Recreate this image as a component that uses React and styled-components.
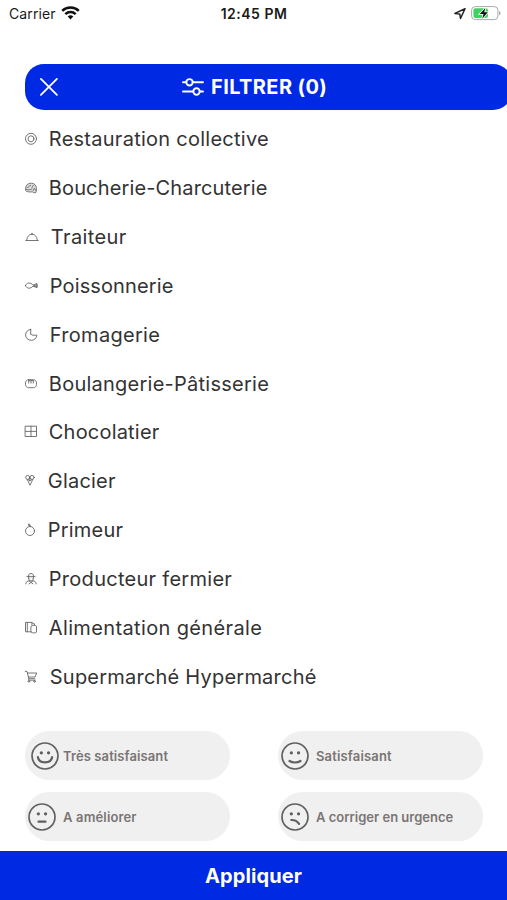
import React from 'react';
import styled, { createGlobalStyle } from 'styled-components';

const Global = createGlobalStyle`
  * { box-sizing: border-box; }
  html, body { margin: 0; padding: 0; background: #fff; }
  body { font-family: Inter, "Liberation Sans", sans-serif; overflow: hidden; }
  svg { display: block; flex: none; }
  button { font: inherit; border: 0; padding: 0; background: none; color: inherit; }
`;

const Screen = styled.div`
  width: 507px;
  height: 900px;
  display: flex;
  flex-direction: column;
  overflow: hidden;
  background: #fff;
`;

const StatusBar = styled.header`
  height: 27px;
  flex: none;
  display: grid;
  grid-template-columns: 1fr auto 1fr;
  align-items: center;
  padding: 0 6px 0 9px;
  color: #1b1b1b;
  font-size: 14px;
`;

const Carrier = styled.div`
  display: flex;
  align-items: center;
  gap: 5px;
  letter-spacing: 0.12px;
`;

const Clock = styled.time`
  font-weight: 600;
  letter-spacing: 0.5px;
  margin-right: 2px;
`;

const Indicators = styled.div`
  display: flex;
  justify-content: flex-end;
  align-items: center;
  gap: 5px;
`;

const FilterBar = styled.div`
  flex: none;
  margin: 37px 0 0 25px;
  width: 487px;
  height: 46px;
  border-radius: 19px;
  background: #0029e3;
  color: #fff;
  display: flex;
  align-items: center;
  padding-left: 14px;
`;

const CloseButton = styled.button`
  width: 20px;
  height: 20px;
`;

const FilterTitle = styled.h1`
  margin: 0 0 0 123px;
  display: flex;
  align-items: center;
  gap: 7px;
  font-size: 20px;
  line-height: 24px;
  font-weight: 700;
  white-space: nowrap;
  letter-spacing: 0.4px;
`;

const CategoryList = styled.ul`
  list-style: none;
  margin: 5px 0 0;
  padding: 0 0 0 25px;
  flex: none;
`;

const Category = styled.li`
  height: 48.84px;
  display: flex;
  align-items: center;
  color: #333;
`;

const CategoryIcon = styled.svg`
  width: ${(p) => p.$w}px;
  height: 14px;
  overflow: visible;
  fill: none;
  stroke: #666;
  stroke-width: 0.9;
  stroke-linecap: round;
  stroke-linejoin: round;
`;

const CategoryName = styled.span`
  margin-left: 10.8px;
  font-size: 20px;
  line-height: 24px;
  white-space: nowrap;
  letter-spacing: ${(p) => p.$tracking}px;
`;

const Ratings = styled.div`
  flex: none;
  margin: 30.2px 0 0 25px;
  display: grid;
  grid-template-columns: 204.5px 204.5px;
  grid-auto-rows: 49px;
  column-gap: 48.5px;
  row-gap: 12px;
`;

const Rating = styled.button`
  display: flex;
  align-items: center;
  gap: ${(p) => p.$gap}px;
  padding-left: ${(p) => p.$inset}px;
  border-radius: 25px;
  background: #f0f0f0;
  color: #7a7573;
`;

const RatingName = styled.span`
  font-size: 13px;
  font-weight: 600;
  white-space: nowrap;
  letter-spacing: ${(p) => p.$tracking}px;
`;

const FaceIcon = styled.svg`
  width: 28px;
  height: 28px;
  fill: none;
  stroke: #62605f;
  stroke-width: 1.7;
  stroke-linecap: round;
`;

const ApplyButton = styled.button`
  margin-top: auto;
  height: 49px;
  flex: none;
  background: #0029e3;
  color: #fff;
  font-size: 20px;
  font-weight: 700;
  letter-spacing: 0.1px;
`;

const categories = [
  { name: 'Restauration collective', w: 13, t: 0.26, icon: <><circle cx="6" cy="6.800" r="5.500" /><circle cx="6" cy="6.800" r="3" /></> },
  { name: 'Boucherie-Charcuterie', w: 13, t: 0.14, icon: <><path fill="#ddd" d="M.6 7.300C.7 4 3 2.200 6.500 2.200c3.300.2 5 2.500 4.900 5.500l-.3 3.600c-1.300.9-2.700.4-3.700-.5-2.400.3-6 .3-6.600-1Z" /><path d="M2.500 6.500c1.500-.2 1.500-1.600 3-2M7 6.500l1.300-2M8.300 9.500l1-2.200 1.400 2M1 8.300c2 .9 4.500.7 6-.3" /></> },
  { name: 'Traiteur', w: 15, t: 0.4, icon: <><path d="M.7 10.500h12.600M1.700 10C2.200 6.300 4.200 4.400 7 4.400s4.800 1.900 5.300 5.600" /><path d="M6.200 4.100c0-1.400 1.600-1.400 1.600 0" /></> },
  { name: 'Poissonnerie', w: 14, t: 0.12, icon: <><path d="M.5 6.600C1.300 3.200 6.200 3.200 8 6.200l4-1.700v4.200L8 7C6.200 10 1.300 10 .5 6.600Z" /><path d="m8.800 6.600 3.200-1v2Z" /></> },
  { name: 'Fromagerie', w: 14, t: 0.3, icon: <path d="M5.700 1.400v5h1c0 .6.300.8.900.8h4.300c-.3 3-2.700 5.100-5.700 5.100C3 12.300.6 10 .6 7 .6 4 2.800 1.700 5.700 1.400Z" /> },
  { name: 'Boulangerie-Pâtisserie', w: 13, t: 0.25, icon: <><path d="M3.700 2.700h4.600c2 .1 3.200 1.500 3.200 3.200v1.500c0 2-1.300 3.300-3.200 3.300H3.700C1.800 10.700.5 9.400.5 7.400V5.900c0-1.700 1.200-3.100 3.200-3.200Z" /><path d="M3.700 3.800v2.300M6 3.800v2.300M8.300 3.800v2.300M3.700 3.700h4.600" /></> },
  { name: 'Chocolatier', w: 13, t: 0.2, icon: <path d="M.5 1.200h11v10.300H.5ZM6 1.200v10.300M.5 6.400h11" /> },
  { name: 'Glacier', w: 12, t: 0.2, icon: <><circle cx="2.700" cy="3.400" r="2" /><circle cx="7.100" cy="3.400" r="2" /><path d="M3 5.600c.3 1.400 3.500 1.400 3.900 0M2.300 5.500 5 11.300l2.700-5.800M4.800 4.300v2.500" /></> },
  { name: 'Primeur', w: 12, t: 0.2, icon: <><circle cx="5" cy="8" r="4.500" /><path d="M5.200 3.500C3.700 3.200 3.500 1.900 3.500 1 4.900 1 5.700 2.100 5.200 3.500Z" fill="#999" /></> },
  { name: 'Producteur fermier', w: 13, t: 0.28, icon: <><path d="M1.900 4.400h8.200M3.400 4.200c.1-1.800 1-2.700 2.600-2.700s2.500.9 2.600 2.700M3.500 4.500v1.600C3.500 7.800 4.500 8.800 6 8.800s2.500-1 2.500-2.700V4.500M.8 11.900c.1-2.200 1.300-2.700 3.400-3M11.200 11.900c-.1-2.200-1.300-2.700-3.400-3M4 8.800l4 3.100M8 8.800l-4 3.100M4.800 6h.1m2.200 0h.1" /></> },
  { name: 'Alimentation générale', w: 13, t: 0.36, icon: <><path d="M6 10.800H.5V1.400h6.400v2.500M2.300 1.400v9.300" /><path d="M6.200 5.200c1.400-1.300 4-1.300 5.300 0v6c-1.300 1-3.900 1-5.300 0Z" /><path d="M6.900 1.700 9.500 2.900v1.200" /></> },
  { name: 'Supermarché Hypermarché', w: 14, t: 0.22, icon: <><path d="M.3 1.400h1.700l1.800 7.300h6M2.500 3h9.200L10 7H3.500M4 8.700l-.6 1.500h6.800" /><circle cx="3.900" cy="11.400" r=".8" /><circle cx="9.500" cy="11.400" r=".8" /></> },
];

const ratings = [
  { name: 'Très satisfaisant', inset: 6, gap: 4, t: 0.1, mouth: 'M6.900 15.200c1.200 6.900 13 6.900 14.200 0' },
  { name: 'Satisfaisant', inset: 3, gap: 7, t: 0.16, mouth: 'M8.500 19c3 2 8 2 11 0' },
  { name: 'A améliorer', inset: 3.4, gap: 6.6, t: 0.15, mouth: 'M10.500 18.700h7' },
  { name: 'A corriger en urgence', inset: 3.4, gap: 6.6, t: 0, mouth: 'M10.300 17c3.500-.2 6 1.300 7.800 3.800' },
];

const WifiIcon = () => (
  <svg width="19" height="15" viewBox="0 0 19 15" fill="none" stroke="#111" strokeWidth="2.500">
    <path d="M1.200 4.900c4.600-4.400 12-4.400 16.600 0M4.300 8.100c3-2.800 7.400-2.800 10.400 0" />
    <path d="M6.700 10.400c1.600-1.500 4-1.500 5.600 0l-2.800 3Z" fill="#111" stroke="none" />
  </svg>
);

const LocationIcon = () => (
  <svg width="12" height="12" viewBox="0 0 12 12" fill="none" stroke="#222" strokeWidth="1.500" strokeLinejoin="round">
    <path d="M11 .8.9 5.400l4.900.6.700 4.500Z" />
  </svg>
);

const BatteryIcon = () => (
  <svg width="30" height="15" viewBox="0 0 30 15">
    <rect x=".6" y=".6" width="26.300" height="13" rx="3.600" fill="#fff" stroke="#aaa" />
    <path d="M28 4.900c2 .7 2 3.700 0 4.400Z" fill="#aaa" />
    <rect x="2.400" y="2.300" width="14.600" height="9.600" rx="2" fill="#3fd263" />
    <path d="m14.400 2-5.700 6h3.800l-1.300 4.700 5.700-6.400h-3.700Z" fill="#111" stroke="#fff" strokeWidth="1.600" paintOrder="stroke" />
  </svg>
);

const CloseIcon = () => (
  <svg width="20" height="20" viewBox="0 0 20 20" stroke="#fff" strokeWidth="1.800" strokeLinecap="round">
    <path d="m1.900 1.900 16 16m0-16-16 16" />
  </svg>
);

const SlidersIcon = () => (
  <svg width="22" height="20" viewBox="0 0 22 20" fill="none" stroke="#fff" strokeWidth="1.900" strokeLinecap="round">
    <path d="M1 5.300h3.300m6.400 0H21M1 14.500h10.300m6.400 0H21" />
    <circle cx="7.500" cy="5.300" r="3.200" />
    <circle cx="14.500" cy="14.500" r="3.200" />
  </svg>
);

export default function App() {
  return (
    <Screen>
      <Global />
      <StatusBar>
        <Carrier>Carrier <WifiIcon /></Carrier>
        <Clock>12:45 PM</Clock>
        <Indicators><LocationIcon /><BatteryIcon /></Indicators>
      </StatusBar>
      <FilterBar>
        <CloseButton aria-label="Fermer"><CloseIcon /></CloseButton>
        <FilterTitle><SlidersIcon />FILTRER (0)</FilterTitle>
      </FilterBar>
      <CategoryList>
        {categories.map((c) => (
          <Category key={c.name}>
            <CategoryIcon $w={c.w}>{c.icon}</CategoryIcon>
            <CategoryName $tracking={c.t}>{c.name}</CategoryName>
          </Category>
        ))}
      </CategoryList>
      <Ratings>
        {ratings.map((r) => (
          <Rating key={r.name} $inset={r.inset} $gap={r.gap}>
            <FaceIcon viewBox="0 0 28 28">
              <circle cx="14" cy="14" r="13" />
              <path d="M10.300 10.800h.1m7.100 0h.1" strokeWidth="3.200" />
              <path d={r.mouth} strokeWidth="2.200" />
            </FaceIcon>
            <RatingName $tracking={r.t}>{r.name}</RatingName>
          </Rating>
        ))}
      </Ratings>
      <ApplyButton>Appliquer</ApplyButton>
    </Screen>
  );
}
